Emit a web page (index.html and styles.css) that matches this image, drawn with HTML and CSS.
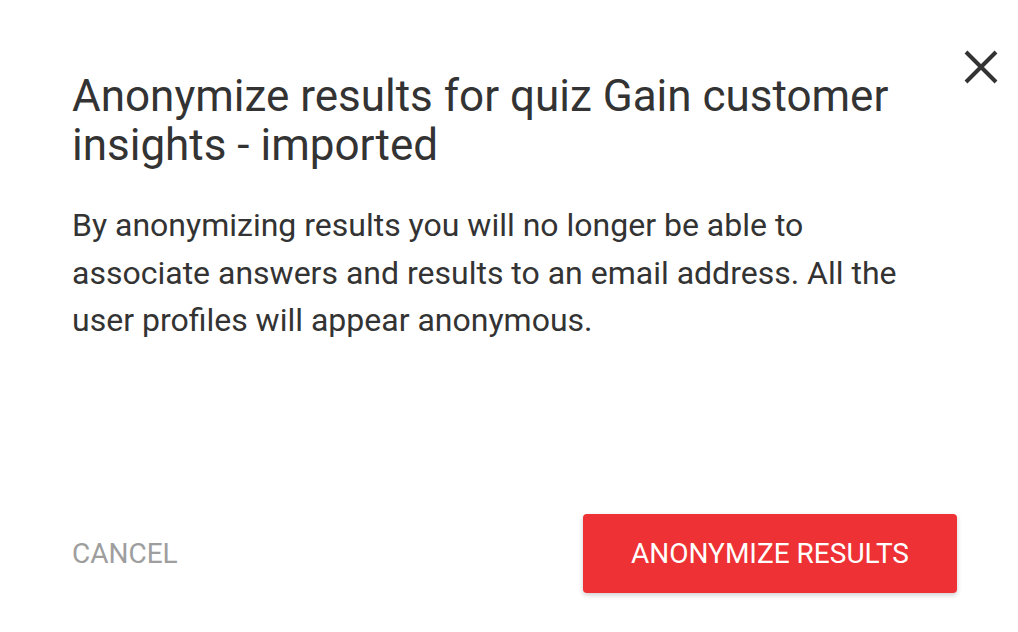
FILE: index.html
```html
<!DOCTYPE html>
<html lang="en">
  <head>
    <meta charset="UTF-8" />
    <meta name="viewport" content="width=device-width, initial-scale=1.0" />
    <title>Anonymize results</title>
    <link rel="stylesheet" href="styles.css">
  </head>
  <body>
    <div class="dialog">
      <button class="close-btn" aria-label="Close">
        <svg width="34" height="34" viewBox="0 0 34 34">
          <path d="M2 2 L32 32 M32 2 L2 32" stroke="#333" stroke-width="4" stroke-linecap="butt" />
        </svg>
      </button>
      <h1 class="dialog-title">Anonymize results for quiz Gain customer insights - imported</h1>
      <p class="dialog-text">
        By anonymizing results you will no longer be able to associate answers and results to an
        email address. All the user profiles will appear anonymous.
      </p>
      <div class="dialog-actions">
        <button class="btn-cancel">Cancel</button>
        <button class="btn-confirm">Anonymize results</button>
      </div>
    </div>
  </body>
</html>
```

FILE: styles.css
```css
* {
  box-sizing: border-box;
}

html {
  font-family: Roboto, "Liberation Sans", sans-serif;
}

body {
  margin: 0;
  background-color: white;
  color: #333;
}

.dialog {
  position: relative;
  height: 632px;
  display: flex;
  flex-direction: column;
  padding: 72px 61px 39px 72px;
}

.close-btn {
  position: absolute;
  top: 50px;
  right: 20px;
  width: 34px;
  height: 34px;
  padding: 0;
  border: none;
  background: none;
  cursor: pointer;
}

.close-btn svg {
  display: block;
}

.dialog-title {
  margin: 0;
  max-width: 850px;
  font-size: 44px;
  font-weight: 400;
  line-height: 49px;
  color: #333;
}

.dialog-text {
  margin: 32px 0 0;
  max-width: 850px;
  font-size: 32px;
  line-height: 47.5px;
  color: #333;
}

.dialog-actions {
  margin-top: auto;
  display: flex;
  justify-content: space-between;
  align-items: center;
}

.btn-cancel {
  padding: 0;
  border: none;
  background: none;
  font-family: inherit;
  font-size: 28px;
  text-transform: uppercase;
  color: #9e9e9e;
  cursor: pointer;
}

.btn-confirm {
  width: 374px;
  height: 79px;
  border: none;
  border-radius: 4px;
  background-color: #ee3134;
  color: white;
  font-family: inherit;
  font-size: 28px;
  text-transform: uppercase;
  box-shadow: 0 2px 5px rgba(0, 0, 0, 0.2);
  cursor: pointer;
}
```
